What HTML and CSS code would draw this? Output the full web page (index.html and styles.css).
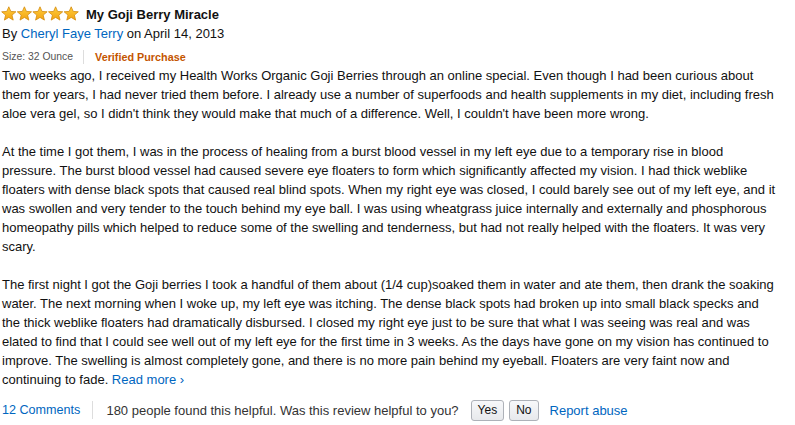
FILE: index.html
```html
<!DOCTYPE html>
<html lang="en">
<head>
<meta charset="utf-8">
<title>My Goji Berry Miracle</title>
<link rel="stylesheet" href="styles.css">
</head>
<body>
<div class="review">
  <div class="review-title">
    <span class="stars" aria-label="5 out of 5 stars">
      <svg width="78" height="16" viewBox="0 0 78 16">
        <defs>
          <linearGradient id="sg" x1="0" y1="0" x2="0" y2="1">
            <stop offset="0" stop-color="#ffce3d"/>
            <stop offset="1" stop-color="#f3a311"/>
          </linearGradient>
          <path id="star" d="M7.8 0.8 L9.8 5.4 L14.9 5.8 L11 9.1 L12.2 14.1 L7.8 11.4 L3.4 14.1 L4.6 9.1 L0.7 5.8 L5.8 5.4 Z" fill="url(#sg)" stroke="#d38a0e" stroke-width="0.8" stroke-linejoin="round"/>
        </defs>
        <use href="#star" x="0"/>
        <use href="#star" x="15.6"/>
        <use href="#star" x="31.2"/>
        <use href="#star" x="46.8"/>
        <use href="#star" x="62.4"/>
      </svg>
    </span>
    <span class="title-text">My Goji Berry Miracle</span>
  </div>
  <div class="byline">By <a href="#" class="link">Cheryl Faye Terry</a> on April 14, 2013</div>
  <div class="meta">
    <span>Size: 32 Ounce</span>
    <span class="sep"></span>
    <span class="verified">Verified Purchase</span>
  </div>
  <div class="review-body">
    <p>Two weeks ago, I received my Health Works Organic Goji Berries through an online special. Even though I had been curious about<br>
    them for years, I had never tried them before. I already use a number of superfoods and health supplements in my diet, including fresh<br>
    aloe vera gel, so I didn't think they would make that much of a difference. Well, I couldn't have been more wrong.</p>
    <p>At the time I got them, I was in the process of healing from a burst blood vessel in my left eye due to a temporary rise in blood<br>
    pressure. The burst blood vessel had caused severe eye floaters to form which significantly affected my vision. I had thick weblike<br>
    floaters with dense black spots that caused real blind spots. When my right eye was closed, I could barely see out of my left eye, and it<br>
    was swollen and very tender to the touch behind my eye ball. I was using wheatgrass juice internally and externally and phosphorous<br>
    homeopathy pills which helped to reduce some of the swelling and tenderness, but had not really helped with the floaters. It was very<br>
    scary.</p>
    <p>The first night I got the Goji berries I took a handful of them about (1/4 cup)soaked them in water and ate them, then drank the soaking<br>
    water. The next morning when I woke up, my left eye was itching. The dense black spots had broken up into small black specks and<br>
    the thick weblike floaters had dramatically disbursed. I closed my right eye just to be sure that what I was seeing was real and was<br>
    elated to find that I could see well out of my left eye for the first time in 3 weeks. As the days have gone on my vision has continued to<br>
    improve. The swelling is almost completely gone, and there is no more pain behind my eyeball. Floaters are very faint now and<br>
    continuing to fade. <a href="#" class="link">Read more ›</a></p>
  </div>
  <div class="review-footer">
    <a href="#" class="link comments">12 Comments</a>
    <span class="sep tall"></span>
    <span class="helpful">180 people found this helpful. Was this review helpful to you?</span>
    <span class="votes">
      <button class="vote-btn">Yes</button>
      <button class="vote-btn">No</button>
    </span>
    <a href="#" class="link">Report abuse</a>
  </div>
</div>
</body>
</html>
```

FILE: styles.css
```css
/* ---------- Base ---------- */
*{margin:0;padding:0;box-sizing:border-box}
body{background:#fff;color:#111;font-family:"Liberation Sans",Arial,Helvetica,sans-serif;font-size:13px;line-height:19px}
a{text-decoration:none}
.link{color:#0066c0}
/* ---------- Review header ---------- */
.review{width:795px;padding:4px 0 0 1px}
.review-title{display:flex;align-items:center;gap:7px;height:20px}
.stars{display:flex}
.stars svg{display:block}
.title-text{font-weight:bold;font-size:13px}
.byline{margin-top:0;padding-left:1px}
.meta{display:flex;align-items:center;font-size:10.4px;color:#555;margin-top:6px;padding-left:1px;line-height:16px}
.meta .sep{width:1px;height:14px;background:#ddd;margin:0 11px 0 10px}
.verified{color:#c45500;font-weight:bold;font-size:10.8px}
/* ---------- Body ---------- */
.review-body{padding-left:1px;margin-top:1px;white-space:nowrap}
.review-body p{margin-bottom:19px}
.review-body p:last-child{margin-bottom:0}
/* ---------- Footer ---------- */
.review-footer{display:flex;align-items:center;margin-top:9px;padding-left:1px;height:24px}
.review-footer .comments{font-size:12.6px}
.review-footer .sep.tall{width:1px;height:18px;background:#ddd;margin:0 13px 0 12px}
.helpful{color:#333}
.votes{display:flex;gap:5px;margin:0 11px 0 12px}
.vote-btn{font-family:inherit;font-size:12px;color:#111;height:21px;padding:0 6px;border:1px solid #adb1b8;border-radius:3px;
  background:linear-gradient(#f7f8fa,#e7e9ec);cursor:pointer}
```
